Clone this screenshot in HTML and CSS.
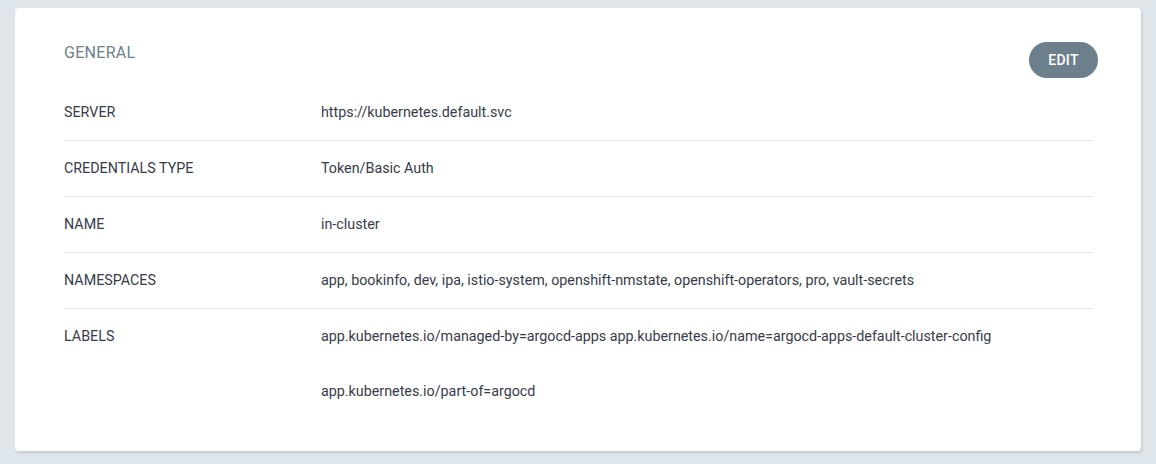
FILE: index.html
```html
<!DOCTYPE html>
<html>
<head>
<meta charset="utf-8">
<link rel="stylesheet" href="styles.css">
</head>
<body>
<div class="card">
  <div class="card-head">
    <div class="title">GENERAL</div>
    <button class="edit">EDIT</button>
  </div>
  <div class="rows">
    <div class="row">
      <div class="label">SERVER</div>
      <div class="value">https://kubernetes.default.svc</div>
    </div>
    <div class="row">
      <div class="label">CREDENTIALS TYPE</div>
      <div class="value">Token/Basic Auth</div>
    </div>
    <div class="row">
      <div class="label">NAME</div>
      <div class="value">in-cluster</div>
    </div>
    <div class="row">
      <div class="label">NAMESPACES</div>
      <div class="value">app, bookinfo, dev, ipa, istio-system, openshift-nmstate, openshift-operators, pro, vault-secrets</div>
    </div>
    <div class="row last">
      <div class="label">LABELS</div>
      <div class="value">
        <div class="line">app.kubernetes.io/managed-by=argocd-apps app.kubernetes.io/name=argocd-apps-default-cluster-config</div>
        <div class="line">app.kubernetes.io/part-of=argocd</div>
      </div>
    </div>
  </div>
</div>
</body>
</html>
```

FILE: styles.css
```css
html, body {
  margin: 0;
  padding: 0;
  background: #dee6eb;
  font-family: Roboto, "Liberation Sans", sans-serif;
}
body {
  padding: 8px 15px 13px 15px;
}
.card {
  background: #fff;
  border-radius: 4px;
  box-shadow: 1px 2px 3px rgba(0, 0, 0, 0.12);
  padding: 34px 48px 32px 49px;
}
.card-head {
  display: flex;
  justify-content: space-between;
  align-items: flex-start;
  margin-right: -5px;
  margin-bottom: 7px;
}
.title {
  font-size: 16px;
  letter-spacing: 0.3px;
  line-height: 22px;
  color: #6b7f8e;
}
.edit {
  width: 69px;
  height: 36px;
  border: none;
  border-radius: 18px;
  background: #6d7f8b;
  color: #fff;
  font-family: Roboto, "Liberation Sans", sans-serif;
  font-weight: 500;
  font-size: 14px;
  letter-spacing: 0.3px;
  padding: 0;
}
.row {
  display: flex;
  border-bottom: 1px solid #dee6eb;
  font-size: 14.3px;
  color: #363c4a;
}
.row.last {
  border-bottom: none;
}
.label {
  width: 257px;
  flex: none;
  line-height: 55px;
}
.value {
  line-height: 55px;
}
```
